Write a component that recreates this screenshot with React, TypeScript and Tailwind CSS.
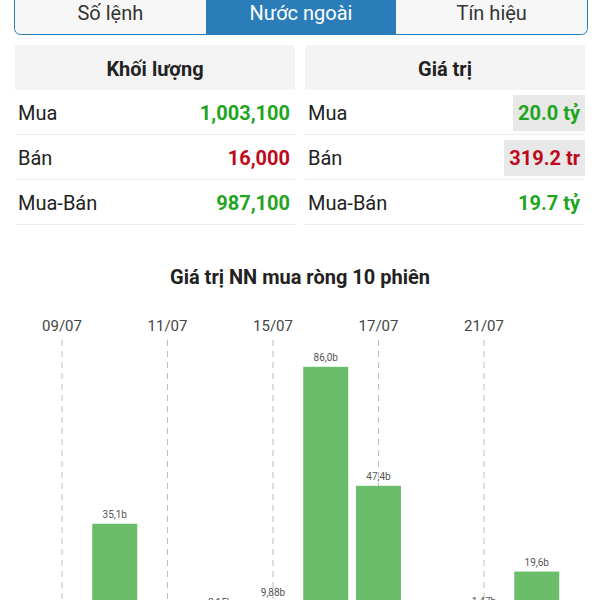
const tabs = ['Số lệnh', 'Nước ngoài', 'Tín hiệu']

type Row = { label: string; value: string; tone: 'up' | 'down'; mark?: boolean }

const volume: Row[] = [
  { label: 'Mua', value: '1,003,100', tone: 'up' },
  { label: 'Bán', value: '16,000', tone: 'down' },
  { label: 'Mua-Bán', value: '987,100', tone: 'up' },
]

const amount: Row[] = [
  { label: 'Mua', value: '20.0 tỷ', tone: 'up', mark: true },
  { label: 'Bán', value: '319.2 tr', tone: 'down', mark: true },
  { label: 'Mua-Bán', value: '19.7 tỷ', tone: 'up' },
]

// 10 sessions, value in billions; labelY overrides for the ones cut off at the bottom
const sessions = [
  { date: '09/07', v: -4.2 },
  { date: '10/07', v: 35.1 },
  { date: '11/07', v: -3.1 },
  { date: '12/07', v: 2.15, labelY: 306 },
  { date: '15/07', v: 9.88 },
  { date: '16/07', v: 86.0 },
  { date: '17/07', v: 47.4 },
  { date: '18/07', v: -6.3 },
  { date: '21/07', v: 1.47, labelY: 305 },
  { date: '22/07', v: 19.6 },
]

function fmt(v: number) {
  const s = Math.abs(v) < 10 ? v.toFixed(2) : v.toFixed(1)
  return s.replace('.', ',') + 'b'
}

function StatTable({ title, rows }: { title: string; rows: Row[] }) {
  return (
    <div className="w-[280px]">
      <div className="h-[45px] bg-[#f4f4f4] flex items-center justify-center pt-[2px]">
        <span className="text-[20px] leading-[24px] font-bold text-[#222]">{title}</span>
      </div>
      {rows.map((r) => (
        <div key={r.label} className="h-[45px] border-b border-[#ececec] flex items-center justify-between pl-[3px] pt-[2px]">
          <span className="text-[20px] leading-[24px] text-[#222]">{r.label}</span>
          <span
            className={`h-[36px] px-[5px] flex items-center text-[20px] leading-[24px] font-bold ${
              r.tone === 'up' ? 'text-[#1fa51f]' : 'text-[#bd0a1c]'
            } ${r.mark ? 'bg-[#e8e8e8]' : ''}`}
          >
            {r.value}
          </span>
        </div>
      ))}
    </div>
  )
}

function Chart() {
  const step = 52.75
  const x0 = 62
  const base = 332
  const k = 3.084
  return (
    <svg width="600" height="340" className="block">
      {sessions.map((s, i) =>
        i % 2 === 0 ? (
          <g key={s.date}>
            <text x={x0 + i * step} y={31} textAnchor="middle" fontSize="15" fill="#444" fontFamily="Roboto">
              {s.date}
            </text>
            <line x1={x0 + i * step} x2={x0 + i * step} y1={40} y2={340} stroke="#bdbdbd" strokeWidth="1" strokeDasharray="6 5" />
          </g>
        ) : null
      )}
      {sessions.map((s, i) => {
        if (s.v <= 0) return null
        const cx = x0 + i * step
        const top = base - s.v * k
        return (
          <g key={'b' + s.date}>
            <rect x={cx - 22.5} y={top} width="45" height={base - top} fill="#6cbd6a" />
            <text x={cx} y={s.labelY ?? top - 6} textAnchor="middle" fontSize="10" fill="#555" fontFamily="Roboto">
              {fmt(s.v)}
            </text>
          </g>
        )
      })}
    </svg>
  )
}

export default function App() {
  return (
    <div className="w-[600px] h-[600px] overflow-hidden bg-white font-['Roboto',sans-serif]">
      {/* Tabs */}
      <div className="mx-[14px] w-[574px] h-[35px] flex border-x border-b border-[#2b7dba] rounded-b-[7px] overflow-hidden">
        {tabs.map((t, i) => (
          <div
            key={t}
            className={`flex-1 flex justify-center pt-[1px] text-[20px] leading-[24px] ${
              i === 1 ? 'bg-[#2b7dba] text-white' : 'bg-[#f7f7f7] text-[#333]'
            }`}
          >
            {t}
          </div>
        ))}
      </div>

      {/* Tables */}
      <div className="mt-[10px] px-[15px] flex gap-[10px]">
        <StatTable title="Khối lượng" rows={volume} />
        <StatTable title="Giá trị" rows={amount} />
      </div>

      {/* Chart */}
      <div className="mt-[40px] text-center text-[20px] leading-[24px] font-bold text-[#222]">
        Giá trị NN mua ròng 10 phiên
      </div>
      <div className="mt-[11px]">
        <Chart />
      </div>
    </div>
  )
}
